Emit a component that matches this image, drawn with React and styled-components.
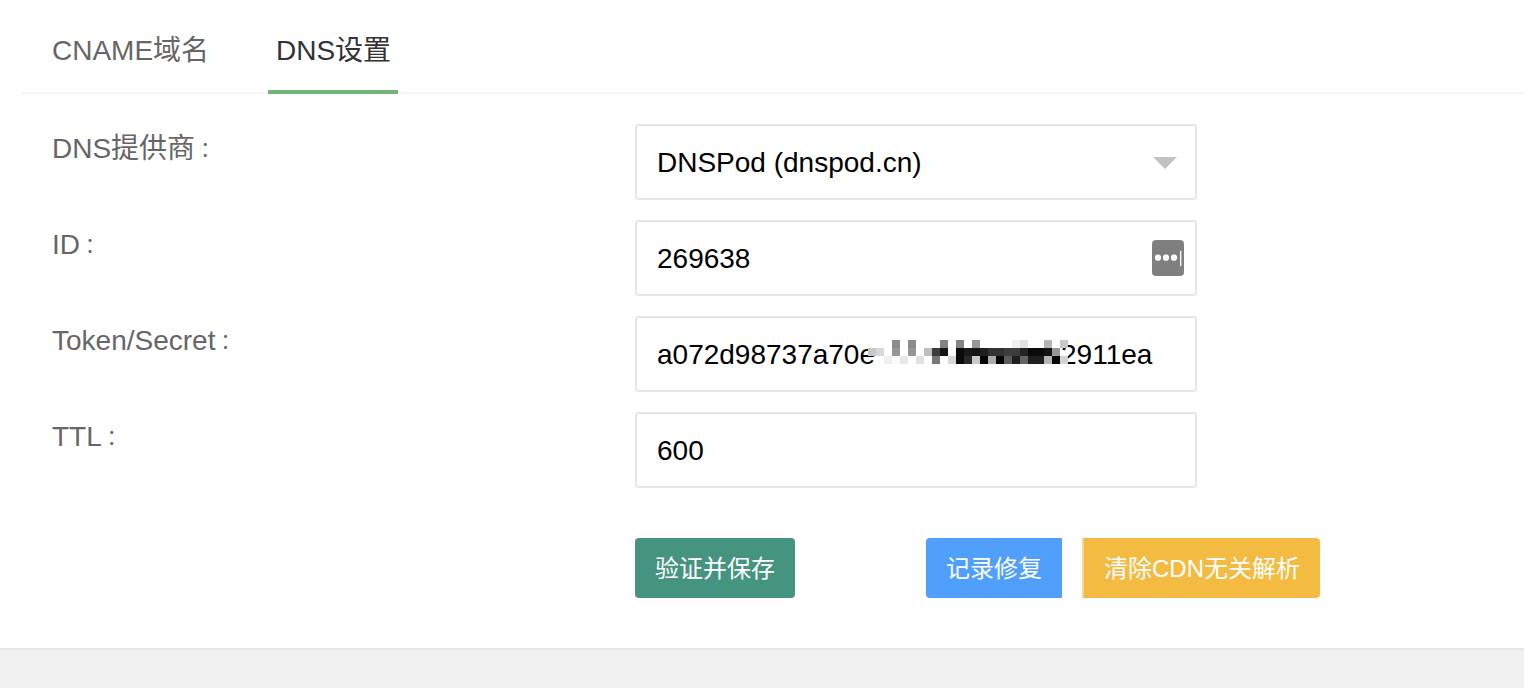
import React from 'react'
import styled, { createGlobalStyle } from 'styled-components'

const GlobalStyle = createGlobalStyle`
html, body {
  margin: 0;
  padding: 0;
  background: #f1f1f1;
  font-family: "Liberation Sans", "Noto Sans CJK SC", sans-serif;
}
* { box-sizing: border-box; }
`

// mosaic over the token, grey level per cell, 0 is white
const MOSAIC = [
  [0,0,0,140,0,140,0,0,0,130,0,130,0,150,0,0,0,0,240,225,0,0,180,0,200],
  [200,215,0,150,0,150,0,190,60,20,0,10,25,20,30,50,50,60,60,35,10,10,20,150,0],
  [0,0,240,250,230,0,225,0,120,0,215,10,40,200,5,170,5,90,30,100,30,30,180,5,210],
]

export default function App() {
  return (
    <Page>
      <GlobalStyle />
      <Panel>
        <Tabs>
          <Tab>CNAME域名</Tab>
          <Tab $active>DNS设置</Tab>
        </Tabs>
        <Form>
          <Row>
            <Label>DNS提供商<Colon>：</Colon></Label>
            <Field>
              <Value>DNSPod (dnspod.cn)</Value>
              <Caret />
            </Field>
          </Row>
          <Row>
            <Label>ID<Colon>：</Colon></Label>
            <Field>
              <Value>269638</Value>
              <KeyBadge>
                <svg width="32" height="36" viewBox="0 0 32 36">
                  <circle cx="6" cy="17.7" r="3.1" fill="#fff" />
                  <circle cx="14" cy="17.7" r="3.1" fill="#fff" />
                  <circle cx="22" cy="17.7" r="3.1" fill="#fff" />
                  <rect x="28" y="10.7" width="1.3" height="15.5" fill="#fff" />
                </svg>
              </KeyBadge>
            </Field>
          </Row>
          <Row>
            <Label>Token/Secret<Colon>：</Colon></Label>
            <Field>
              <Value>a072d98737a70e<HiddenGap />2911ea</Value>
              <Mosaic>
                {MOSAIC.flat().map((v, i) => (
                  <MosaicCell key={i} $v={v} />
                ))}
              </Mosaic>
            </Field>
          </Row>
          <Row>
            <Label>TTL<Colon>：</Colon></Label>
            <Field>
              <Value>600</Value>
            </Field>
          </Row>
          <Buttons>
            <Button $bg="#45947f" $w={160}>验证并保存</Button>
            <Button $bg="#50a0fb" $w={136} $left={131} $square>记录修复</Button>
            <Button $bg="#f3bb41" $w={238} $left={20} $edge>清除CDN无关解析</Button>
          </Buttons>
        </Form>
      </Panel>
    </Page>
  )
}

const Page = styled.div`
min-height: 688px;
background: #f1f1f1;
overflow: hidden;
`
const Panel = styled.div`
height: 648px;
padding: 0 0 0 21px;
background: #fff;
box-shadow: 0 1px 3px rgba(0,0,0,0.08);
`
const Tabs = styled.div`
display: flex;
height: 94px;
border-bottom: 2px solid #f5f5f5;
padding-left: 23px;
gap: 52px;
`
const Tab = styled.div`
height: 94px;
padding: 0 7px 0 8px;
width: ${p => (p.$active ? '130px' : '172px')};
line-height: 102px;
font-size: 28px;
white-space: nowrap;
color: ${p => (p.$active ? '#333' : '#666')};
border-bottom: ${p => (p.$active ? '4px solid #73b47b' : 'none')};
`
const Form = styled.div`
padding-top: 30px;
display: flex;
flex-direction: column;
gap: 20px;
`
const Row = styled.div`
display: flex;
height: 76px;
`
const Label = styled.div`
width: 614px;
padding-left: 31px;
font-size: 28px;
line-height: 49px;
color: #666;
`
const Colon = styled.span`
font-family: "Noto Sans CJK TC", sans-serif;
font-size: 20px;
`
const Field = styled.div`
position: relative;
width: 562px;
height: 76px;
padding: 2px 20px 0;
display: flex;
align-items: center;
border: 2px solid #e6e6e6;
border-radius: 4px;
background: #fff;
`
const Value = styled.div`
font-size: 28px;
color: #000;
white-space: nowrap;
`
const HiddenGap = styled.span`
display: inline-block;
width: 186px;
`
const Caret = styled.div`
position: absolute;
right: 18px;
top: 31px;
width: 0;
height: 0;
border-left: 12px solid transparent;
border-right: 12px solid transparent;
border-top: 12px solid #c2c2c2;
`
const KeyBadge = styled.div`
position: absolute;
right: 11px;
top: 18px;
width: 32px;
height: 36px;
border-radius: 4px;
background: #7f7f7f;
line-height: 0;
`
const Mosaic = styled.div`
position: absolute;
left: 231px;
top: 22px;
display: grid;
grid-template-columns: repeat(25, 8px);
grid-auto-rows: 8px;
`
const MosaicCell = styled.div`
background: ${p => (p.$v === 0 ? 'transparent' : `rgb(${p.$v},${p.$v},${p.$v})`)};
`
const Buttons = styled.div`
display: flex;
padding: 30px 0 0 614px;
`
const Button = styled.div`
width: ${p => p.$w}px;
height: 60px;
padding-bottom: 3px;
margin-left: ${p => p.$left || 0}px;
display: flex;
align-items: center;
justify-content: center;
font-size: 24px;
color: #fff;
background: ${p => p.$bg};
border-radius: ${p => (p.$square ? '4px 0 0 4px' : p.$edge ? '0 4px 4px 0' : '4px')};
border-left: ${p => (p.$edge ? '2px solid #f8d68c' : 'none')};
`
